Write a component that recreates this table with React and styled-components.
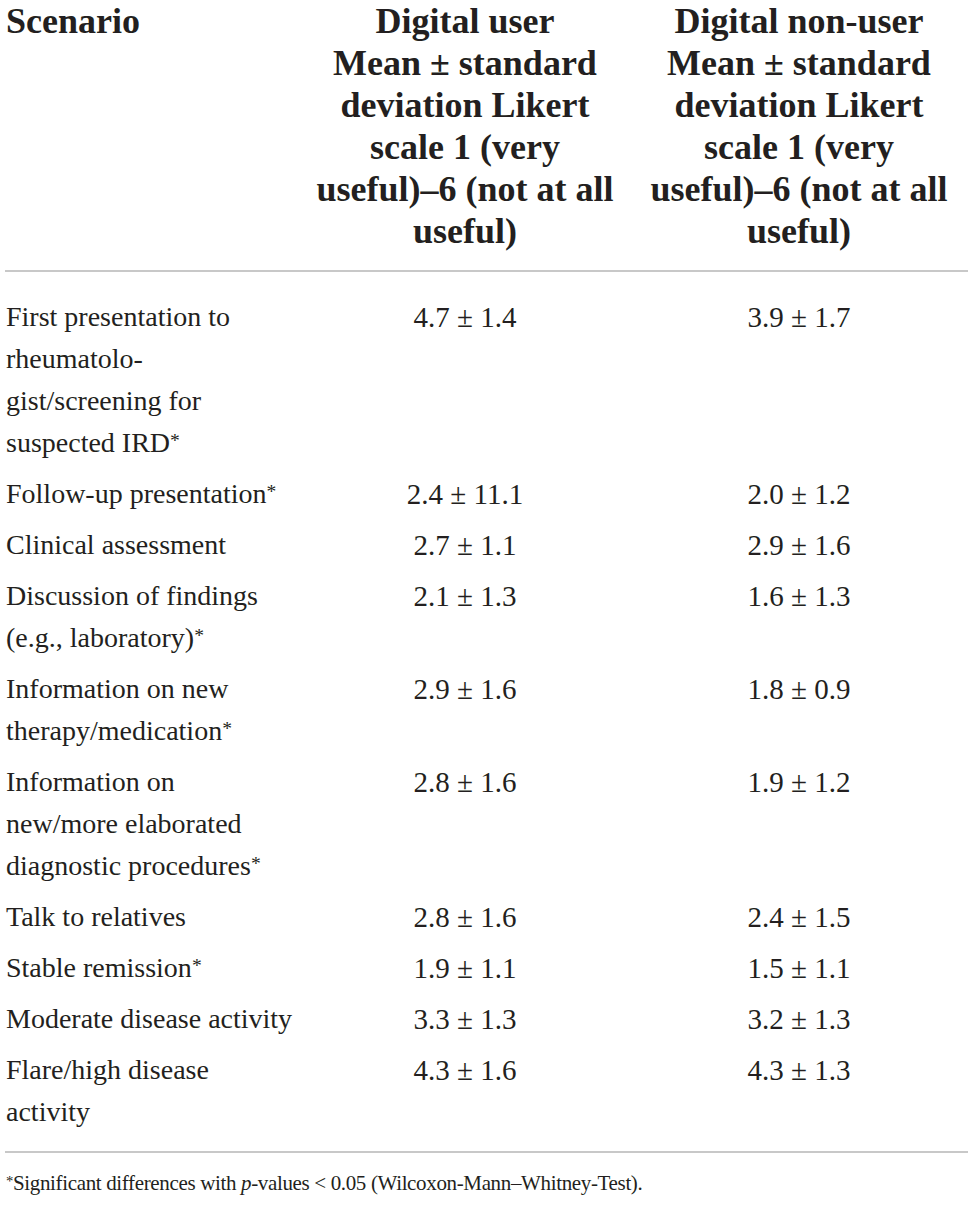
import React from 'react'
import styled, { createGlobalStyle } from 'styled-components'

const GlobalStyle = createGlobalStyle`
    html, body {
        margin: 0;
        padding: 0;
        background: #FFFFFF;
    }

    body {
        font-family: "Liberation Serif", "Times New Roman", serif;
        color: #231f20;
    }
`

const Page = styled.div`
    width: 968px;
    padding-left: 5px;
    box-sizing: border-box;
`

const Table = styled.table`
    width: 963px;
    border-collapse: collapse;
    table-layout: fixed;
`

const Col = styled.col`
    width: ${p => p.$w}px;
`

const HeadCell = styled.th`
    padding: 0 0 18px;
    vertical-align: top;
    font-weight: 700;
    font-size: 36px;
    line-height: 42px;
    text-align: center;
    white-space: nowrap;
    border-bottom: 2px solid #c8c8c8;

    &.first {
        text-align: left;
        padding-left: 1px;
    }
`

const Row = styled.tr`
    &:first-child > td {
        padding-top: 24px;
    }

    &:last-child > td {
        padding-bottom: 18px;
        border-bottom: 2px solid #c8c8c8;
    }
`

const Cell = styled.td`
    padding: 5px 0 4px;
    vertical-align: top;
    line-height: 42px;
    white-space: nowrap;

    &.label {
        padding-left: 1px;
        font-size: 28px;
    }

    &.value {
        text-align: center;
        font-size: 29px;
    }
`

const Star = styled.span`
    font-size: 0.7em;
    vertical-align: 0.28em;
    line-height: 0;
`

const Footnote = styled.p`
    margin: 0;
    padding: 15px 0 0 1px;
    font-size: 21px;
    line-height: 30px;
    letter-spacing: -0.35px;

    i {
        font-style: italic;
    }
`

const heads = [
    ['Digital user', 'Mean ± standard', 'deviation Likert', 'scale 1 (very', 'useful)–6 (not at all', 'useful)'],
    ['Digital non-user', 'Mean ± standard', 'deviation Likert', 'scale 1 (very', 'useful)–6 (not at all', 'useful)'],
]

const rows = [
    { label: ['First presentation to', 'rheumatolo-', 'gist/screening for', 'suspected IRD'], star: true, a: '4.7 ± 1.4', b: '3.9 ± 1.7' },
    { label: ['Follow-up presentation'], star: true, a: '2.4 ± 11.1', b: '2.0 ± 1.2' },
    { label: ['Clinical assessment'], a: '2.7 ± 1.1', b: '2.9 ± 1.6' },
    { label: ['Discussion of findings', '(e.g., laboratory)'], star: true, a: '2.1 ± 1.3', b: '1.6 ± 1.3' },
    { label: ['Information on new', 'therapy/medication'], star: true, a: '2.9 ± 1.6', b: '1.8 ± 0.9' },
    { label: ['Information on', 'new/more elaborated', 'diagnostic procedures'], star: true, a: '2.8 ± 1.6', b: '1.9 ± 1.2' },
    { label: ['Talk to relatives'], a: '2.8 ± 1.6', b: '2.4 ± 1.5' },
    { label: ['Stable remission'], star: true, a: '1.9 ± 1.1', b: '1.5 ± 1.1' },
    { label: ['Moderate disease activity'], a: '3.3 ± 1.3', b: '3.2 ± 1.3' },
    { label: ['Flare/high disease', 'activity'], a: '4.3 ± 1.6', b: '4.3 ± 1.3' },
]

const Lines = ({ lines, star }) => (
    <>
        {lines.map((line, i) => (
            <React.Fragment key={i}>
                {i > 0 && <br/>}
                {line}
                {star && i === lines.length - 1 && <Star>*</Star>}
            </React.Fragment>
        ))}
    </>
)

export default function App() {
    return (
        <Page>
            <GlobalStyle/>
            <Table>
                <colgroup>
                    <Col $w={295}/>
                    <Col $w={330}/>
                    <Col $w={338}/>
                </colgroup>
                <thead>
                    <tr>
                        <HeadCell className='first'>Scenario</HeadCell>
                        {heads.map((h, i) => (
                            <HeadCell key={i}><Lines lines={h}/></HeadCell>
                        ))}
                    </tr>
                </thead>
                <tbody>
                    {rows.map((r, i) => (
                        <Row key={i}>
                            <Cell className='label'><Lines lines={r.label} star={r.star}/></Cell>
                            <Cell className='value'>{r.a}</Cell>
                            <Cell className='value'>{r.b}</Cell>
                        </Row>
                    ))}
                </tbody>
            </Table>
            <Footnote>
                <Star>*</Star>Significant differences with <i>p</i>-values &lt; 0.05 (Wilcoxon-Mann–Whitney-Test).
            </Footnote>
        </Page>
    )
}
